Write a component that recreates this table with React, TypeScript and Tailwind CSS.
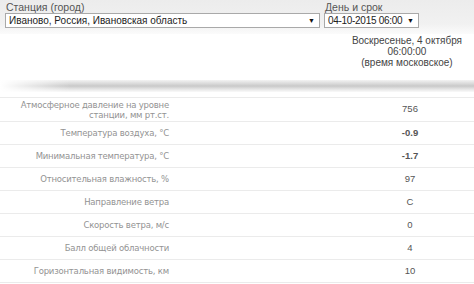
const rows: { label: string[]; value: string; bold?: boolean }[] = [
  { label: ['Атмосферное давление на уровне', 'станции, мм рт.ст.'], value: '756' },
  { label: ['Температура воздуха, °C'], value: '-0.9', bold: true },
  { label: ['Минимальная температура, °C'], value: '-1.7', bold: true },
  { label: ['Относительная влажность, %'], value: '97' },
  { label: ['Направление ветра'], value: 'С' },
  { label: ['Скорость ветра, м/с'], value: '0' },
  { label: ['Балл общей облачности'], value: '4' },
  { label: ['Горизонтальная видимость, км'], value: '10' },
];

function Select({ text, width, tight }: { text: string; width: string; tight?: boolean }) {
  return (
    <div
      className={`${width} h-[15px] bg-white border border-[#a9a9a9] flex items-center justify-between pl-[3px] pr-[4px] text-[10px] leading-none text-[#222]`}
    >
      <span className={`whitespace-nowrap ${tight ? 'tracking-[-0.3px]' : ''}`}>{text}</span>
      <span className="shrink-0 text-[7px] text-[#111]">▼</span>
    </div>
  );
}

export default function App() {
  return (
    <div className="w-[474px] h-[284px] overflow-hidden bg-white font-['Liberation_Sans',Arial,sans-serif]">
      {/* Header with selects */}
      <div className="h-[34px] bg-[linear-gradient(to_bottom,#ececec,#f1f1f1_70%,#fbfbfb)] flex gap-[4px] pl-[5px] pt-[2px]">
        <div className="flex flex-col">
          <div className="text-[10.5px] leading-[11px] text-[#555] pl-[1px]">Станция (город)</div>
          <Select text="Иваново, Россия, Ивановская область" width="w-[315px]" />
        </div>
        <div className="flex flex-col">
          <div className="text-[10.5px] leading-[11px] text-[#555] pl-[1px]">День и срок</div>
          <Select text="04-10-2015 06:00" width="w-[95px]" tight />
        </div>
      </div>

      {/* Date */}
      <div className="h-[46px] flex justify-end pr-[12px]">
        <div className="text-center text-[10px] leading-[11px] text-[#444] pt-[1px]">
          <div>Воскресенье, 4 октября</div>
          <div>06:00:00</div>
          <div>(время московское)</div>
        </div>
      </div>

      {/* Shadow band */}
      <div className="h-[12px] bg-[linear-gradient(to_right,#ffffff,rgba(255,255,255,0)_70px),linear-gradient(to_bottom,#f3f3f3,#d6d6d6_35%,#c9c9c9_50%,#e4e4e4_75%,#fafafa)]" />
      <div className="h-[5px]" />

      {/* Table */}
      <div className="border-t border-[#ebebeb]">
        {rows.map((r, i) => (
          <div
            key={i}
            className={`grid grid-cols-[169px_1fr_128px] items-center border-b border-[#ebebeb] ${i === 0 ? 'h-[24px]' : 'h-[23px]'}`}
          >
            <div className="text-right font-['DejaVu_Sans',Verdana,sans-serif] text-[8.5px] leading-[10px] text-[#939393] tracking-[-0.2px]">
              {r.label.map((l, j) => (
                <div key={j}>{l}</div>
              ))}
            </div>
            <div />
            <div className={`text-center text-[9.5px] text-[#555] ${r.bold ? 'font-bold' : ''}`}>{r.value}</div>
          </div>
        ))}
      </div>
    </div>
  );
}
